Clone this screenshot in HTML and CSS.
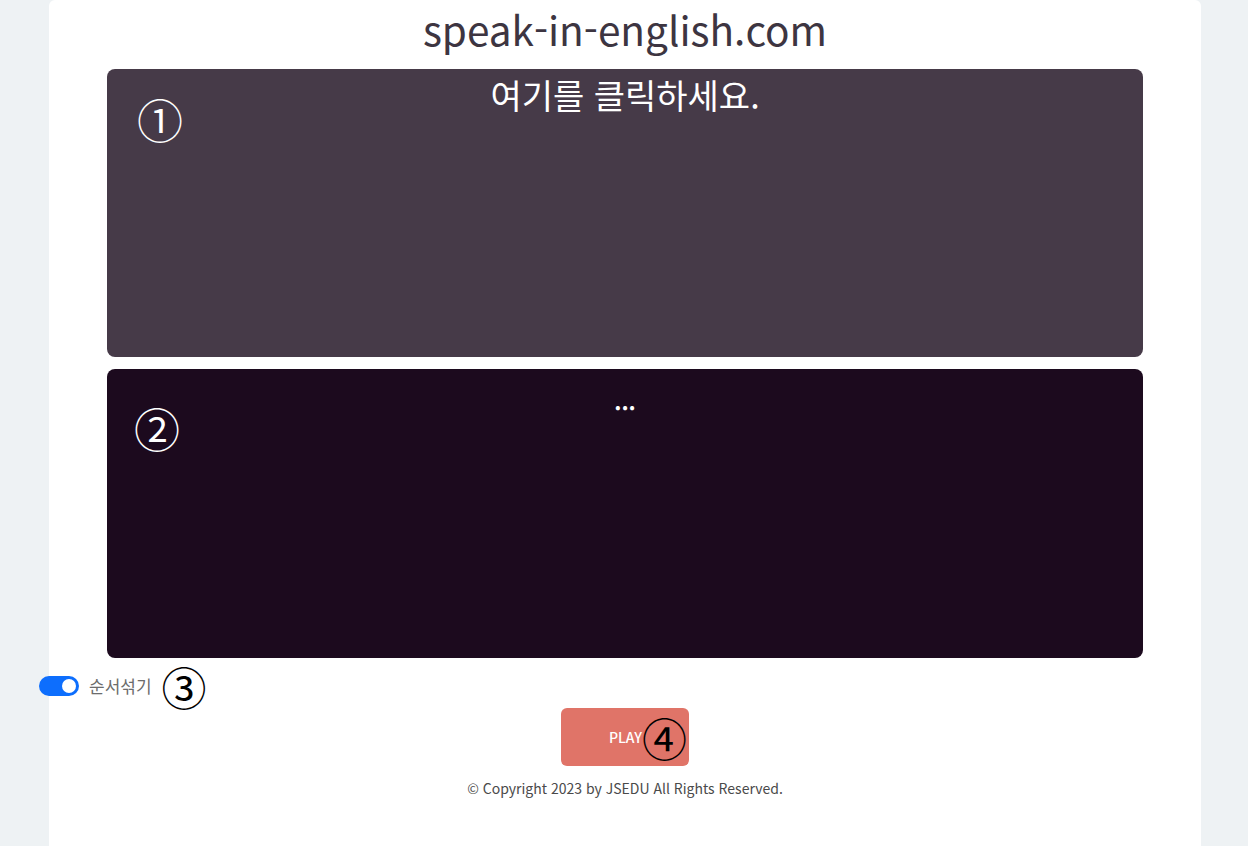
FILE: index.html
```html
<!DOCTYPE html>
<html lang="ko">
<head>
<meta charset="utf-8">
<title>speak-in-english.com</title>
<link rel="stylesheet" href="styles.css">
</head>
<body>
<main class="page">
  <h1 class="title">speak-in-english.com</h1>
  <section class="card card-question">
    <span class="mark mark-light">①</span>
    <p class="card-text">여기를 클릭하세요.</p>
  </section>
  <section class="card card-answer">
    <span class="mark mark-light mark-two">②</span>
    <p class="dots">...</p>
  </section>
  <div class="controls">
    <label class="switch">
      <span class="switch-track"><span class="switch-knob"></span></span>
      <span class="switch-label">순서섞기</span>
    </label>
    <span class="mark mark-dark">③</span>
  </div>
  <div class="play-row">
    <button class="play-btn"><span class="play-text">PLAY</span><span class="mark mark-dark mark-btn">④</span></button>
  </div>
  <footer class="footer">© Copyright 2023 by JSEDU All Rights Reserved.</footer>
</main>
</body>
</html>
```

FILE: styles.css
```css
* { box-sizing: border-box; }
html, body { height: 100%; }
body {
  margin: 0;
  background: #eef2f4;
  font-family: "Noto Sans CJK KR", "Noto Sans", sans-serif;
  color: #3f3a40;
}
.page {
  width: 1152px;
  min-height: 846px;
  margin: 0 0 0 49px;
  background: #ffffff;
  border-radius: 6px 6px 0 0;
  display: flex;
  flex-direction: column;
  align-items: center;
}
.title {
  margin: 0;
  font-size: 40.5px;
  font-weight: 400;
  line-height: 58px;
  color: #3d3541;
  height: 69px;
}
.card {
  position: relative;
  width: 1036px;
  height: 288px;
  border-radius: 8px;
  color: #ffffff;
  display: flex;
  justify-content: center;
}
.card-question { background: #463a48; }
.card-answer { background: #1c0a1e; margin-top: 12px; height: 289px; }
.card-text {
  margin: 0;
  padding-top: 4px;
  font-size: 34px;
  line-height: 44px;
}
.dots {
  margin: 0;
  padding-top: 19px;
  font-size: 22px;
  line-height: 24px;
  font-weight: 700;
}
.mark {
  font-size: 46px;
  line-height: 1;
  font-family: "Noto Sans CJK KR", sans-serif;
}
.mark-light {
  position: absolute;
  left: 30px;
  top: 26px;
  color: #ffffff;
  font-weight: 350;
}
.mark-two { left: 27px; top: 35px; }
.mark-dark { color: #000000; }
.controls {
  align-self: flex-start;
  margin-left: -10px;
  margin-top: 6px;
  display: flex;
  align-items: center;
  height: 44px;
}
.switch {
  display: flex;
  align-items: center;
  gap: 10px;
}
.switch-track {
  width: 40px;
  height: 20px;
  border-radius: 10px;
  background: #0d6efd;
  position: relative;
  display: block;
}
.switch-knob {
  position: absolute;
  right: 3px;
  top: 3px;
  width: 14px;
  height: 14px;
  border-radius: 50%;
  background: #ffffff;
}
.switch-label {
  font-size: 17px;
  color: #6c6c6c;
  line-height: 20px;
}
.controls .mark-dark { margin-left: 10px; font-size: 45px; }
.play-row { margin-top: 0; }
.play-btn {
  width: 128px;
  height: 58px;
  border: none;
  border-radius: 6px;
  background: #e07468;
  display: flex;
  align-items: center;
  justify-content: center;
  padding: 0 0 0 46px;
  font-family: inherit;
  cursor: pointer;
}
.play-text {
  color: #ffffff;
  font-size: 14px;
  font-weight: 500;
}
.mark-btn { font-size: 45px; }
.footer {
  margin-top: 12px;
  font-size: 14px;
  color: #4a4a4a;
}
```
